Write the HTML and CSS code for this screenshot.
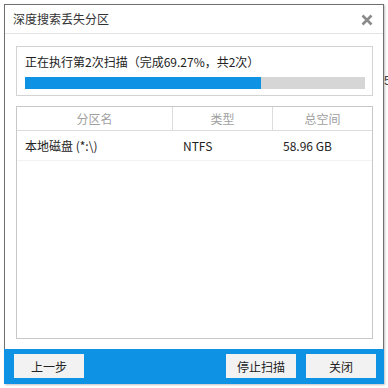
FILE: index.html
```html
<!DOCTYPE html>
<html lang="zh-CN">
<head>
<meta charset="utf-8">
<link rel="stylesheet" href="styles.css">
</head>
<body>
<span class="bg-digit">5</span>
<div class="dialog">
  <div class="titlebar">
    <span class="title">深度搜索丢失分区</span>
    <svg class="close" width="12" height="12" viewBox="0 0 12 12"><path d="M1.5 1.5 L10.5 10.5 M10.5 1.5 L1.5 10.5" stroke="#8a8a8a" stroke-width="2.6" stroke-linecap="butt"/></svg>
  </div>
  <div class="content">
    <div class="progress-box">
      <div class="progress-text">正在执行第2次扫描（完成69.27%，共2次）</div>
      <div class="track"><div class="fill" style="width:69.27%"></div></div>
    </div>
    <div class="table">
      <div class="row head">
        <div class="cell c1">分区名</div>
        <div class="cell c2">类型</div>
        <div class="cell c3">总空间</div>
      </div>
      <div class="row item">
        <div class="cell c1 left">本地磁盘 (*:\)</div>
        <div class="cell c2 left">NTFS</div>
        <div class="cell c3 left">58.96 GB</div>
      </div>
    </div>
  </div>
  <div class="footer">
    <button class="btn">上一步</button>
    <div class="spacer"></div>
    <button class="btn">停止扫描</button>
    <button class="btn">关闭</button>
  </div>
</div>
</body>
</html>
```
FILE: styles.css
```css
* { box-sizing: border-box; }
html, body { margin: 0; padding: 0; background: #ffffff; }
body {
  font-family: "Microsoft YaHei", "Noto Sans CJK SC", "Noto Sans", sans-serif;
  font-size: 12px;
  color: #333;
  width: 388px;
  height: 388px;
  overflow: hidden;
  position: relative;
  padding: 4px 0 0 4px;
}
.bg-digit {
  position: absolute;
  left: 384px;
  top: 73px;
  font-size: 13px;
  color: #444;
  font-family: "Liberation Sans", sans-serif;
}
.dialog {
  width: 380px;
  height: 380px;
  border: 1px solid #707070;
  background: #fff;
  display: flex;
  flex-direction: column;
  box-shadow: 1px 1px 2px rgba(0,0,0,0.25);
}
.titlebar {
  height: 29px;
  border-bottom: 1px solid #e3e3e3;
  display: flex;
  align-items: center;
  padding: 0 8px 0 8px;
  flex: none;
}
.title { flex: 1; font-size: 12px; color: #333; margin-top: -1px; }
.close { margin-right: 2px; margin-top: 1px; }
.content {
  flex: 1;
  padding: 12px 10px 10px 11px;
  display: flex;
  flex-direction: column;
}
.progress-box {
  height: 50px;
  border: 1px solid #d3d3d3;
  padding: 7px 6px 0 8px;
  flex: none;
}
.progress-text { line-height: 16px; color: #222; }
.track {
  margin-top: 7px;
  height: 12px;
  width: 340px;
  background: #d6d6d6;
}
.fill { height: 100%; background: #0e93e4; }
.table {
  margin-top: 10px;
  flex: 1;
  border: 1px solid #c8c8c8;
  display: flex;
  flex-direction: column;
}
.row { display: flex; }
.row.head { height: 24px; border-bottom: 1px solid #dcdcdc; }
.row.item { height: 30px; border-bottom: 1px solid #f2f2f2; }
.cell { display: flex; align-items: center; justify-content: center; }
.head .cell { color: #a0a0a0; }
.head .c1, .head .c2 { border-right: 1px solid #dcdcdc; }
.c1 { width: 156px; }
.c2 { width: 100px; }
.c3 { flex: 1; }
.cell.left { justify-content: flex-start; color: #222; }
.item .c1 { padding-left: 8px; }
.item .c2 { padding-left: 10px; }
.item .c3 { padding-left: 10px; }
.footer {
  flex: none;
  height: 35px;
  background: #0e93e4;
  display: flex;
  align-items: flex-start;
  padding: 5px 8px 0 10px;
  gap: 10px;
  margin: 0 -1px -1px -1px;
}
.spacer { flex: 1; }
.btn {
  width: 70px;
  height: 24px;
  border: none;
  background: #f2f2f2;
  font-family: "Microsoft YaHei", "Noto Sans CJK SC", sans-serif;
  font-size: 12px;
  color: #222;
  padding: 0;
}
```
